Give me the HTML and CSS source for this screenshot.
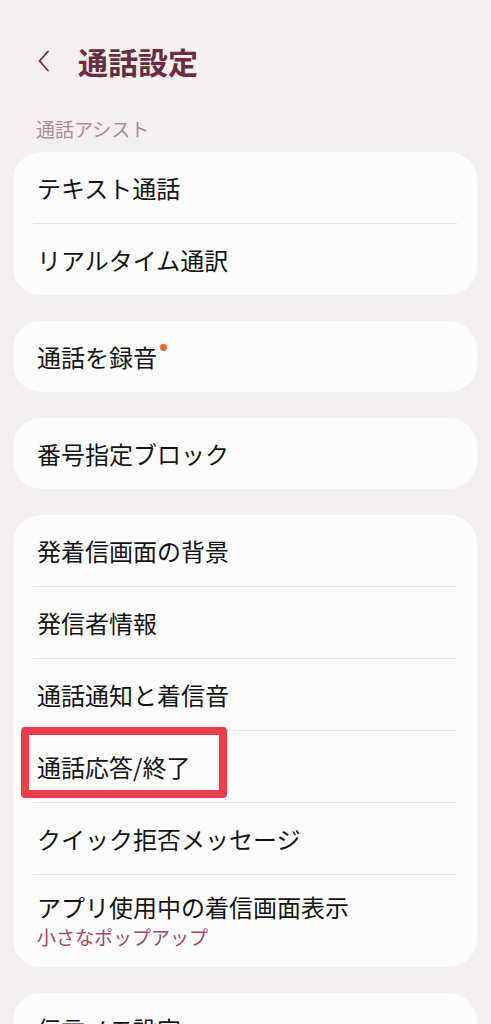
FILE: index.html
```html
<!DOCTYPE html>
<html lang="ja">
<head>
  <meta charset="UTF-8">
  <meta name="viewport" content="width=device-width, initial-scale=1.0">
  <title>通話設定</title>
  <link rel="stylesheet" href="styles.css">
</head>
<body>

  <div class="header">
    <svg class="back" width="16" height="22" viewBox="0 0 16 22">
      <path d="M12 1.5 L3.5 11 L12 20.5" fill="none" stroke="#6b2d3e" stroke-width="1.8" stroke-linecap="round" stroke-linejoin="round"/>
    </svg>
    <h1 class="title">通話設定</h1>
  </div>

  <p class="section-label">通話アシスト</p>

  <div class="card">
    <div class="row"><div class="row-label">テキスト通話</div></div>
    <div class="row"><div class="row-label">リアルタイム通訳</div></div>
  </div>

  <div class="card">
    <div class="row">
      <div class="row-label"><span>通話を録音<span class="dot"></span></span></div>
    </div>
  </div>

  <div class="card">
    <div class="row"><div class="row-label">番号指定ブロック</div></div>
  </div>

  <div class="card">
    <div class="row"><div class="row-label">発着信画面の背景</div></div>
    <div class="row"><div class="row-label">発信者情報</div></div>
    <div class="row"><div class="row-label">通話通知と着信音</div></div>
    <div class="row highlighted">
      <div class="row-label">通話応答/終了</div>
      <div class="mark"></div>
    </div>
    <div class="row"><div class="row-label">クイック拒否メッセージ</div></div>
    <div class="row">
      <div class="row-text">
        <div class="row-title">アプリ使用中の着信画面表示</div>
        <div class="row-sub">小さなポップアップ</div>
      </div>
    </div>
  </div>

  <div class="card">
    <div class="row"><div class="row-label">伝言メモ設定</div></div>
  </div>

</body>
</html>
```

FILE: styles.css
```css
body {
  font-family: "Noto Sans CJK JP", "Noto Sans", sans-serif;
  margin: 0;
  padding: 0;
  background: #f4f0f1;
  color: #141414;
  overflow: hidden;
}

.header {
  display: flex;
  align-items: center;
  height: 42px;
  padding: 40px 0 0 36px;
}

.back {
  display: block;
  margin-right: 26px;
}

.title {
  margin: 0;
  font-size: 30px;
  font-weight: 700;
  line-height: 42px;
  color: #6b2d3e;
}

.section-label {
  margin: 35px 0 11px;
  padding-left: 36px;
  font-size: 19px;
  line-height: 24px;
  color: #a98b95;
}

.card {
  background: #fdfcfc;
  margin: 0 14px 26px 13px;
  border-radius: 28px;
  overflow: hidden;
}

.row {
  position: relative;
  padding: 0 24px;
}

.row + .row::before {
  content: '';
  display: block;
  height: 1px;
  margin: 0 -4px;
  background: #e7e3e4;
}

.row-label {
  display: flex;
  align-items: center;
  height: 71px;
  font-size: 24px;
  line-height: 30px;
}

.dot {
  display: inline-block;
  width: 7px;
  height: 7px;
  border-radius: 50%;
  background: #e7692a;
  vertical-align: top;
  margin: 2px 0 0 3px;
}

.row-text {
  padding: 17px 0 18px;
}

.row-title {
  font-size: 24px;
  line-height: 30px;
}

.row-sub {
  margin-top: 3px;
  font-size: 19px;
  line-height: 24px;
  color: #9c4a68;
}

.mark {
  position: absolute;
  left: 8px;
  top: -3px;
  width: 206px;
  height: 71px;
  box-sizing: border-box;
  border: 8px solid #f03c48;
  border-radius: 4px;
}
```
